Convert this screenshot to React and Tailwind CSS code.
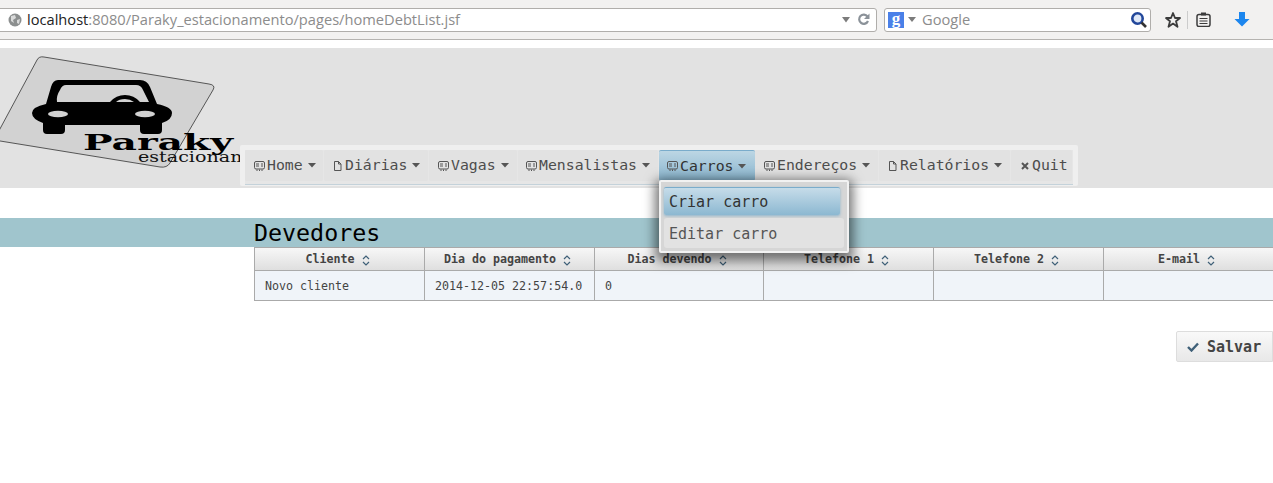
import React from "react";

const mono = "font-['DejaVu_Sans_Mono',monospace]";

const menuItems = [
  { label: "Home", icon: "card", caret: true, width: "w-[78px]", pad: "pl-[9px]" },
  { label: "Diárias", icon: "doc", caret: true, width: "w-[104px]", pad: "pl-[9px]" },
  { label: "Vagas", icon: "card", caret: true, width: "w-[88px]", pad: "pl-[9px]" },
  { label: "Mensalistas", icon: "card", caret: true, width: "w-[140px]", pad: "pl-[8px]" },
  { label: "Carros", icon: "card", caret: true, width: "w-[96px]", pad: "pl-[8px]", active: true },
  { label: "Endereços", icon: "card", caret: true, width: "w-[123px]", pad: "pl-[9px]" },
  { label: "Relatórios", icon: "doc", caret: true, width: "w-[131px]", pad: "pl-[9px]" },
  { label: "Quit", icon: "close", caret: false, width: "w-[61px]", pad: "pl-[9px]" },
];

const columns = [
  { title: "Cliente", width: "w-[170px]", value: "Novo cliente" },
  { title: "Dia do pagamento", width: "w-[170px]", value: "2014-12-05 22:57:54.0" },
  { title: "Dias devendo", width: "w-[169px]", value: "0" },
  { title: "Telefone 1", width: "w-[170px]", value: "" },
  { title: "Telefone 2", width: "w-[170px]", value: "" },
  { title: "E-mail", width: "w-[170px]", value: "" },
];

function MenuIcon({ type }) {
  if (type === "doc") {
    return (
      <svg width="9" height="10" viewBox="0 0 9 10" className="mr-px shrink-0" fill="none" stroke="#555" strokeWidth="1">
        <path d="M1.5 .5H5.5L8 3V9.5H1.5Z M5.5 .5V3H8" />
      </svg>
    );
  }
  if (type === "close") {
    return (
      <svg width="8" height="8" viewBox="0 0 8 8" className="ml-px mr-px shrink-0" fill="none" stroke="#555" strokeWidth="2">
        <path d="M1 1L7 7M7 1L1 7" />
      </svg>
    );
  }
  return (
    <svg width="11" height="10" viewBox="0 0 11 10" className="shrink-0" fill="none" stroke="#555" strokeWidth="1">
      <rect x=".5" y=".5" width="10" height="7.5" rx="1.5" />
      <path d="M2 3H5M2 5H5M7 3H9M7 5H9M3 8.5V10M5.5 8.5V10M8 8.5V10" />
    </svg>
  );
}

function Caret() {
  return (
    <svg width="8" height="5" viewBox="0 0 8 5" className="shrink-0" fill="#555">
      <path d="M0 0H8L4 4.5Z" />
    </svg>
  );
}

function SortIcon() {
  return (
    <svg width="8" height="11" viewBox="0 0 8 11" className="shrink-0" fill="none" stroke="#3f6078" strokeWidth="1.2">
      <path d="M1 4L4 1L7 4M1 7L4 10L7 7" />
    </svg>
  );
}

function BrowserBar() {
  return (
    <div className="flex h-10 items-center border-b border-[#b5b3b0] bg-[#f2f1f0] font-['Open_Sans',sans-serif]">
      <div className="ml-[-6px] flex h-6 w-[883px] items-center rounded-[3px] border border-[#b0aeab] bg-white pl-[13px] pr-[6px]">
        <svg width="14" height="14" viewBox="0 0 14 14" className="shrink-0">
          <circle cx="7" cy="7" r="6.5" fill="#8c8f8f" />
          <path d="M3 3L7 2L8 5L5 7L6 10L3 8ZM9 7L12 6L11 11L9 10Z" fill="#d9dada" />
        </svg>
        <span className="ml-[5px] text-[14.65px] text-[#222]">localhost</span>
        <span className="text-[14.65px] text-[#8c8c8c]">:8080/Paraky_estacionamento/pages/homeDebtList.jsf</span>
        <svg width="10" height="6" viewBox="0 0 10 6" className="ml-auto shrink-0" fill="#7c7c7c">
          <path d="M1 0H9L5 5.5Z" />
        </svg>
        <svg width="13" height="13" viewBox="0 0 13 13" className="ml-[6px] shrink-0" fill="none" stroke="#8b9299" strokeWidth="2.2">
          <path d="M10.5 3.5A4.6 4.6 0 1 0 11 8" />
          <path d="M12.5 .5V6H7Z" fill="#8b9299" stroke="none" />
        </svg>
      </div>
      <div className="ml-[7px] flex h-6 w-[267px] items-center rounded-[3px] border border-[#b0aeab] bg-white pl-[3px] pr-[2px]">
        <span className="flex h-4 w-4 shrink-0 items-center justify-center bg-[#4a80e8] pb-[3px] font-['Liberation_Serif',serif] text-[17px] font-bold leading-none text-white">
          g
        </span>
        <svg width="8" height="5" viewBox="0 0 8 5" className="ml-1 shrink-0" fill="#7c7c7c">
          <path d="M0 0H8L4 5Z" />
        </svg>
        <span className="ml-[6px] text-[14.65px] text-[#8c8c8c]">Google</span>
        <svg width="18" height="18" viewBox="0 0 18 18" className="ml-auto shrink-0" fill="none">
          <circle cx="7.5" cy="7.5" r="5.2" fill="#dfe8f7" stroke="#22479a" strokeWidth="2.6" />
          <path d="M11.5 11.5L16 16" stroke="#333" strokeWidth="2.6" />
        </svg>
      </div>
      <svg width="18" height="18" viewBox="0 0 18 18" className="ml-[13px] shrink-0" fill="none" stroke="#3c3c3c" strokeWidth="1.8">
        <path d="M9 2L11 7H16L12 10.3L13.5 15.8L9 12.6L4.5 15.8L6 10.3L2 7H7Z" strokeLinejoin="round" />
      </svg>
      <div className="ml-[5px] h-[18px] w-px bg-[#ccc]" />
      <svg width="15" height="15" viewBox="0 0 15 15" className="ml-2 shrink-0">
        <rect x="1" y="2.5" width="13" height="12" rx="2" fill="#f2f1f0" stroke="#3c3c3c" strokeWidth="1.5" />
        <rect x="5" y=".5" width="5" height="3" fill="#3c3c3c" />
        <path d="M3.5 6.5H11.5M3.5 9H11.5M3.5 11.5H11.5" stroke="#3c3c3c" strokeWidth="1.2" />
      </svg>
      <svg width="16" height="15" viewBox="0 0 16 15" className="ml-[23px] shrink-0" fill="#1c86ee">
        <path d="M5 0H11V7H15.5L8 14.5L.5 7H5Z" />
      </svg>
    </div>
  );
}

function Logo() {
  return (
    <svg width="240" height="140" viewBox="0 48 240 140" className="block shrink-0">
      <path
        d="M44 57L209 84Q216 85 213 90L170 163Q167 168 160 167L-6 140L37 60Q39 56 44 57Z"
        fill="#d2d2d2"
        stroke="#333"
        strokeWidth="0.8"
      />
      <path
        d="M58 80H140Q147 80 150 87L157 104Q172 107 172 113Q172 120 162 123V130Q162 134 158 134H144Q140 134 140 130V125H65V130Q65 134 61 134H47Q43 134 43 130V123Q32 119 32 113Q32 107 46 104L51 87Q53 80 58 80Z"
        fill="#000"
      />
      <path d="M66 85H136Q141 85 143 90L149 102H57Q56 96 60 90Q62 85 66 85Z" fill="#d2d2d2" />
      <path d="M110 102Q116 95 125 95Q134 95 140 102H134Q130 99 125 99Q119 99 116 102Z" fill="#000" />
      <ellipse cx="58" cy="114" rx="10" ry="3.2" fill="#d2d2d2" />
      <ellipse cx="145" cy="114" rx="10" ry="3.2" fill="#d2d2d2" />
      <text x="83" y="150" fontFamily="DejaVu Serif, serif" fontWeight="700" fontSize="22" textLength="150" lengthAdjust="spacingAndGlyphs" fill="#000">
        Paraky
      </text>
      <text x="138" y="162" fontFamily="DejaVu Serif, serif" fontSize="14" textLength="153" lengthAdjust="spacingAndGlyphs" fill="#111">
        estacionamento
      </text>
    </svg>
  );
}

function Dropdown() {
  return (
    <div className="absolute left-[419px] top-[35px] z-10 h-[73px] w-[190px] rounded-[2px] border-2 border-[#f2f2f2] bg-[#d6d6d6] pl-[3px] pt-[5px] shadow-[0_4px_12px_4px_rgba(0,0,0,0.55)]">
      <div className="flex h-7 w-[176px] items-center rounded-[2px] border-t border-[#7aaccb] bg-gradient-to-b from-[#c6dce9] to-[#8cb8d1] pl-[5px] pt-px text-[15px] text-[#333] shadow-[0_1px_3px_rgba(122,172,203,0.8)]">
        Criar carro
      </div>
      <div className="mt-[3px] flex h-[30px] w-[180px] items-center rounded-[3px] bg-[#e2e2e2] pl-[5px] pt-[2px] text-[15px] text-[#555]">
        Editar carro
      </div>
    </div>
  );
}

function Menu() {
  return (
    <div className={`relative mb-[2px] h-[41px] w-[838px] rounded-[2px] bg-[#efefef] pl-[5px] pt-[5px] ${mono}`}>
      <div className="h-[35px] w-[828px] border-b border-[#c4d2da] bg-[#e6e6e6]">
        <div className="flex h-[31px]">
          {menuItems.map((item) => (
            <div
              key={item.label}
              className={`flex h-[31px] shrink-0 items-center rounded-[2px] text-[14.8px] ${item.pad} ${item.width} ${
                item.active
                  ? "border-t border-[#7aaccb] bg-gradient-to-b from-[#bcd6e4] to-[#89b5ce] text-[#333]"
                  : "mr-px bg-[#e2e2e2] text-[#4d4d4d]"
              }`}
            >
              <MenuIcon type={item.icon} />
              <span className="ml-[2px]">{item.label}</span>
              {item.caret && (
                <span className="ml-[5px]">
                  <Caret />
                </span>
              )}
            </div>
          ))}
        </div>
      </div>
      <Dropdown />
    </div>
  );
}

function DebtTable() {
  return (
    <div className={`ml-[254px] flex flex-col border-y border-l border-[#aaa] text-[11.65px] ${mono}`}>
      <div className="flex h-[23px] border-b border-[#aaa] bg-gradient-to-b from-[#f7f7f7] to-[#dfdfdf]">
        {columns.map((col) => (
          <div
            key={col.title}
            className={`flex shrink-0 items-center justify-center gap-[7px] border-r border-[#aaa] pr-[4px] pt-[2px] font-bold text-[#444] ${col.width}`}
          >
            {col.title}
            <SortIcon />
          </div>
        ))}
      </div>
      <div className="flex h-[29px] bg-[#f0f4f9]">
        {columns.map((col) => (
          <div
            key={col.title}
            className={`flex shrink-0 items-center border-r border-[#aaa] pl-[10px] pt-[2px] text-[#444] ${col.width}`}
          >
            {col.value}
          </div>
        ))}
      </div>
    </div>
  );
}

export default function App() {
  return (
    <div className="h-[483px] w-[1273px] overflow-hidden bg-white">
      <BrowserBar />
      <div className="mt-2 flex h-[140px] items-end bg-[#e2e2e2]">
        <Logo />
        <Menu />
      </div>
      <div className="mt-[30px] flex h-[29px] items-center bg-[#a0c5cd] pl-[254px]">
        <h1 className={`text-[23.3px] leading-none text-black ${mono}`}>Devedores</h1>
      </div>
      <DebtTable />
      <div className="mt-[30px] flex justify-end">
        <button
          className={`flex h-[31px] w-[97px] shrink-0 items-center rounded-l-[2px] border border-[#ddd] bg-gradient-to-b from-[#f9f9f9] to-[#e8e8e8] pl-[10px] pt-px text-[15px] font-bold text-[#444] ${mono}`}
        >
          <svg width="12" height="10" viewBox="0 0 12 10" className="shrink-0" fill="none" stroke="#3f6078" strokeWidth="2.4">
            <path d="M1 5L4.5 8.5L11 1.5" />
          </svg>
          <span className="ml-[8px]">Salvar</span>
        </button>
      </div>
    </div>
  );
}
